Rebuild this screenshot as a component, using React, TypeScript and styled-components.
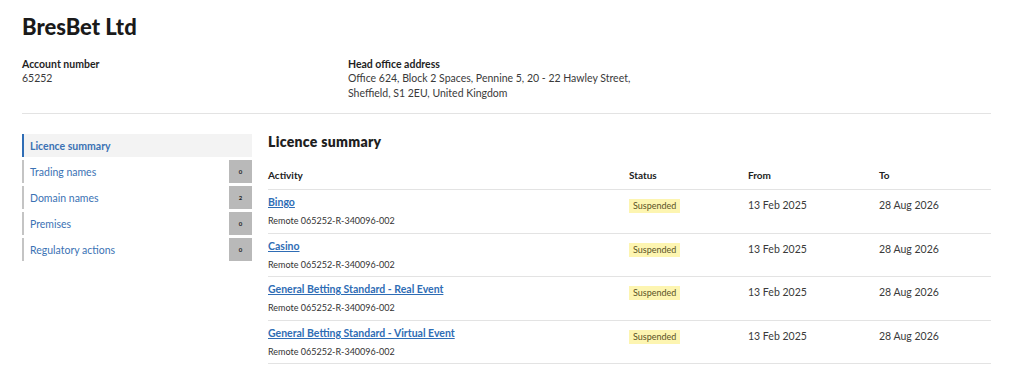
import React from "react"
import styled, { createGlobalStyle } from "styled-components"

const GlobalStyle = createGlobalStyle`
  body {
    margin: 0;
    background: #ffffff;
    font-family: "Lato", "Open Sans", sans-serif;
    color: #333333;
  }
`

interface NavItem {
  label: string
  count?: number
  active?: boolean
}

interface Licence {
  activity: string
  reference: string
  status: string
  from: string
  to: string
}

const navItems: NavItem[] = [
  { label: "Licence summary", active: true },
  { label: "Trading names", count: 0 },
  { label: "Domain names", count: 2 },
  { label: "Premises", count: 0 },
  { label: "Regulatory actions", count: 0 },
]

const licences: Licence[] = [
  { activity: "Bingo", reference: "Remote 065252-R-340096-002", status: "Suspended", from: "13 Feb 2025", to: "28 Aug 2026" },
  { activity: "Casino", reference: "Remote 065252-R-340096-002", status: "Suspended", from: "13 Feb 2025", to: "28 Aug 2026" },
  {
    activity: "General Betting Standard - Real Event",
    reference: "Remote 065252-R-340096-002",
    status: "Suspended",
    from: "13 Feb 2025",
    to: "28 Aug 2026",
  },
  {
    activity: "General Betting Standard - Virtual Event",
    reference: "Remote 065252-R-340096-002",
    status: "Suspended",
    from: "13 Feb 2025",
    to: "28 Aug 2026",
  },
]

export default function App() {
  return (
    <>
      <GlobalStyle />
      <Page>
        <Title>BresBet Ltd</Title>
        <Details>
          <Detail>
            <DetailLabel>Account number</DetailLabel>
            <DetailValue>65252</DetailValue>
          </Detail>
          <Detail>
            <DetailLabel>Head office address</DetailLabel>
            <DetailValue>
              Office 624, Block 2 Spaces, Pennine 5, 20 - 22 Hawley Street,
              <br />
              Sheffield, S1 2EU, United Kingdom
            </DetailValue>
          </Detail>
        </Details>
        <Divider />
        <Body>
          <Sidebar>
            {navItems.map((item) => (
              <NavLink key={item.label} $active={item.active}>
                <span>{item.label}</span>
                {item.count !== undefined && <Count>{item.count}</Count>}
              </NavLink>
            ))}
          </Sidebar>
          <Main>
            <SectionTitle>Licence summary</SectionTitle>
            <Table>
              <HeadRow>
                <span>Activity</span>
                <span>Status</span>
                <span>From</span>
                <span>To</span>
              </HeadRow>
              {licences.map((licence) => (
                <Row key={licence.activity}>
                  <ActivityCell>
                    <ActivityLink href="#">{licence.activity}</ActivityLink>
                    <Reference>{licence.reference}</Reference>
                  </ActivityCell>
                  <Cell>
                    <StatusTag>{licence.status}</StatusTag>
                  </Cell>
                  <DateCell>{licence.from}</DateCell>
                  <DateCell>{licence.to}</DateCell>
                </Row>
              ))}
            </Table>
          </Main>
        </Body>
      </Page>
    </>
  )
}

const Page = styled.div`
  width: 969px;
  padding: 14px 33px 0 22px;
`

const Title = styled.h1`
  margin: 0;
  font-family: "Lato", sans-serif;
  font-weight: 900;
  font-size: 22px;
  line-height: 26px;
  color: #1a1a1a;
`

const Details = styled.div`
  display: grid;
  grid-template-columns: 326px 1fr;
  margin-top: 18px;
`

const Detail = styled.div`
  display: flex;
  flex-direction: column;
`

const DetailLabel = styled.div`
  font-size: 10.5px;
  font-weight: 700;
  line-height: 13px;
  color: #1f1f1f;
`

const DetailValue = styled.div`
  font-size: 10.5px;
  line-height: 15px;
  color: #3a3a3a;
`

const Divider = styled.hr`
  margin: 12px 0 0;
  border: none;
  border-top: 1px solid #e3e3e3;
`

const Body = styled.div`
  display: flex;
  gap: 16px;
  margin-top: 20px;
`

const Sidebar = styled.nav`
  width: 230px;
  display: flex;
  flex-direction: column;
  gap: 3px;
`

const NavLink = styled.a<{ $active?: boolean }>`
  display: flex;
  align-items: center;
  justify-content: space-between;
  height: 23px;
  padding-left: 6px;
  border-left: 2px solid ${(p) => (p.$active ? "#2f6db5" : "#c4c4c4")};
  background: ${(p) => (p.$active ? "#f3f3f3" : "transparent")};
  font-size: 10.5px;
  font-weight: ${(p) => (p.$active ? 700 : 400)};
  color: #3b72b4;
  text-decoration: none;
`

const Count = styled.span`
  display: flex;
  align-items: center;
  justify-content: center;
  width: 23px;
  height: 23px;
  background: #b9b9b9;
  font-size: 6px;
  font-weight: 700;
  color: #222222;
`

const Main = styled.main`
  flex: 1;
  display: flex;
  flex-direction: column;
`

const SectionTitle = styled.h2`
  margin: 0;
  font-family: "Lato", sans-serif;
  font-size: 14px;
  font-weight: 800;
  line-height: 16px;
  color: #1f1f1f;
  letter-spacing: 0.3px;
`

const Table = styled.div`
  margin-top: 18px;
  display: flex;
  flex-direction: column;
`

const HeadRow = styled.div`
  display: grid;
  grid-template-columns: 361px 119px 131px 1fr;
  padding-bottom: 7px;
  border-bottom: 1px solid #e3e3e3;
  font-size: 10px;
  font-weight: 700;
  line-height: 14px;
  color: #222222;
`

const Row = styled.div`
  display: grid;
  grid-template-columns: 361px 119px 131px 1fr;
  height: 43.5px;
  border-bottom: 1px solid #e3e3e3;
  box-sizing: border-box;
`

const Cell = styled.div`
  display: flex;
  align-items: flex-start;
  padding-top: 9px;
`

const ActivityCell = styled.div`
  display: flex;
  flex-direction: column;
  padding-top: 6px;
  gap: 6px;
`

const ActivityLink = styled.a`
  font-size: 10.5px;
  font-weight: 700;
  line-height: 13px;
  color: #2f6db5;
  text-decoration: underline;
`

const Reference = styled.span`
  font-size: 9px;
  line-height: 12px;
  color: #333333;
`

const DateCell = styled.div`
  padding-top: 8px;
  font-size: 10.5px;
  line-height: 14px;
  color: #3a3a3a;
`

const StatusTag = styled.span`
  padding: 1px 4px;
  background: #fdf5b1;
  font-size: 9px;
  line-height: 12px;
  color: #5a5326;
`
